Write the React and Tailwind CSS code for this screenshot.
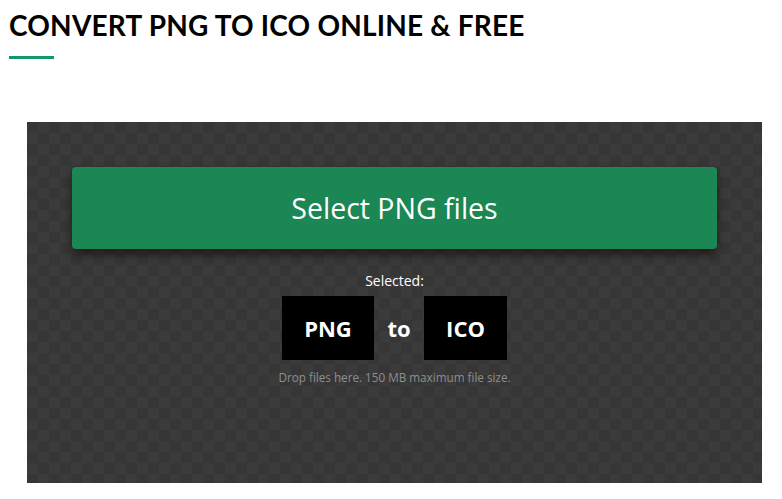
import React from 'react';

const App = () => {
  return (
    <div className="w-[782px] h-[499px] bg-white overflow-hidden" style={{ fontFamily: '"Open Sans", sans-serif' }}>
      <div className="pl-[9px] pt-[8px]">
        <h1 className="font-['Lato',sans-serif] font-bold text-[28px] leading-[34px] text-black tracking-[0.2px]">
          CONVERT PNG TO ICO ONLINE &amp; FREE
        </h1>
        <div className="mt-[14px] w-[45px] h-[3px] bg-[#12976b]" />
      </div>

      <div className="mt-[63px] ml-[27px] w-[735px] h-[361px] bg-[#363636] bg-[repeating-conic-gradient(#3b3b3b_0_25%,#363636_0_50%)] bg-[length:22px_22px] px-[45px] pt-[45px]">
        <button className="w-full h-[82px] rounded-[4px] bg-[#1a8754] text-white text-[28.5px] shadow-[0_6px_10px_rgba(20,0,0,0.55)]">
          Select PNG files
        </button>

        <div className="mt-[22px] flex flex-col items-center">
          <div className="text-white text-[14px] leading-[19px]">Selected:</div>
          <div className="mt-[6px] flex items-center">
            <div className="w-[92px] h-[64px] bg-black flex items-center justify-center text-white font-bold text-[22px]">PNG</div>
            <div className="w-[50px] text-center text-white font-bold text-[22px]">to</div>
            <div className="w-[83px] h-[64px] bg-black flex items-center justify-center text-white font-bold text-[22px]">ICO</div>
          </div>
          <div className="mt-[10px] text-[#8e8e8e] text-[11.7px] leading-[14px]">
            Drop files here. 150 MB maximum file size.
          </div>
        </div>
      </div>
    </div>
  );
};

export default App;
